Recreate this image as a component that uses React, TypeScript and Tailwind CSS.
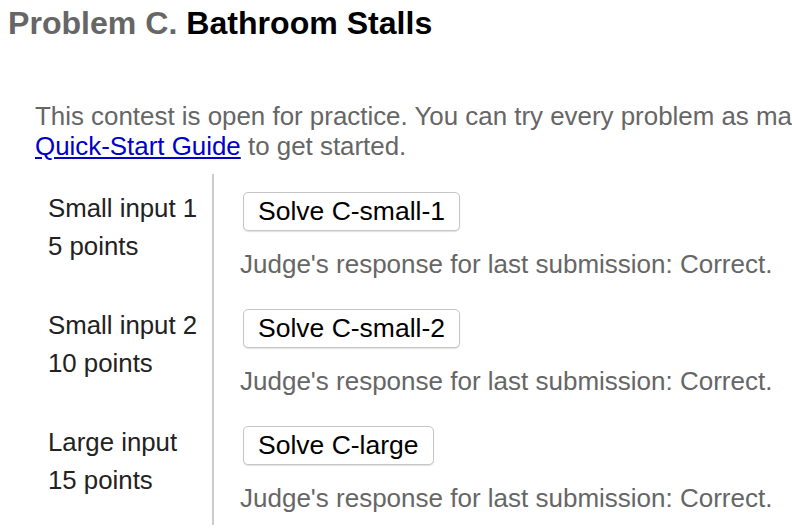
import React from "react";

const rows = [
  { label: "Small input 1", points: "5 points", btn: "Solve C-small-1" },
  { label: "Small input 2", points: "10 points", btn: "Solve C-small-2" },
  { label: "Large input", points: "15 points", btn: "Solve C-large" },
];

export default function App() {
  return (
    <div
      className="w-[792px] h-[530px] overflow-hidden bg-white"
      style={{ fontFamily: '"Liberation Sans", Arial, sans-serif' }}
    >
      <h1 className="pl-[8px] pt-[5px] text-[32.1px] leading-[37px] font-bold whitespace-nowrap">
        <span className="text-[#666666]">Problem C.</span>{" "}
        <span className="text-black">Bathroom Stalls</span>
      </h1>
      <p className="mt-[60px] pl-[35px] text-[25.9px] leading-[29.5px] text-[#666666] whitespace-nowrap">
        This contest is open for practice. You can try every problem as many times as you like, though we won't keep track of which problems you solve. Read the
        <br />
        <a href="#" className="text-[#0000cc] underline">
          Quick-Start Guide
        </a>{" "}
        to get started.
      </p>
      <div className="mt-[13px] flex flex-col">
        {rows.map((r) => (
          <div key={r.label} className="flex">
            <div className="w-[212px] shrink-0 pl-[48px] pt-[15px] text-[25.8px] leading-[38px] text-[#222222]">
              <div>{r.label}</div>
              <div>{r.points}</div>
            </div>
            <div className="border-l-2 border-[#cccccc] pl-[26px] pt-[18px] pb-[8px]">
              <button className="ml-[3px] h-[39px] px-[14px] flex items-center rounded-[5px] border border-[#c6c6c6] bg-white text-black text-[26.5px] leading-none shadow-[0_1px_1px_rgba(0,0,0,0.12)] whitespace-nowrap">
                {r.btn}
              </button>
              <div className="mt-[15px] text-[26px] leading-[37px] text-[#666666] whitespace-nowrap">
                Judge's response for last submission: Correct.
              </div>
            </div>
          </div>
        ))}
      </div>
    </div>
  );
}
